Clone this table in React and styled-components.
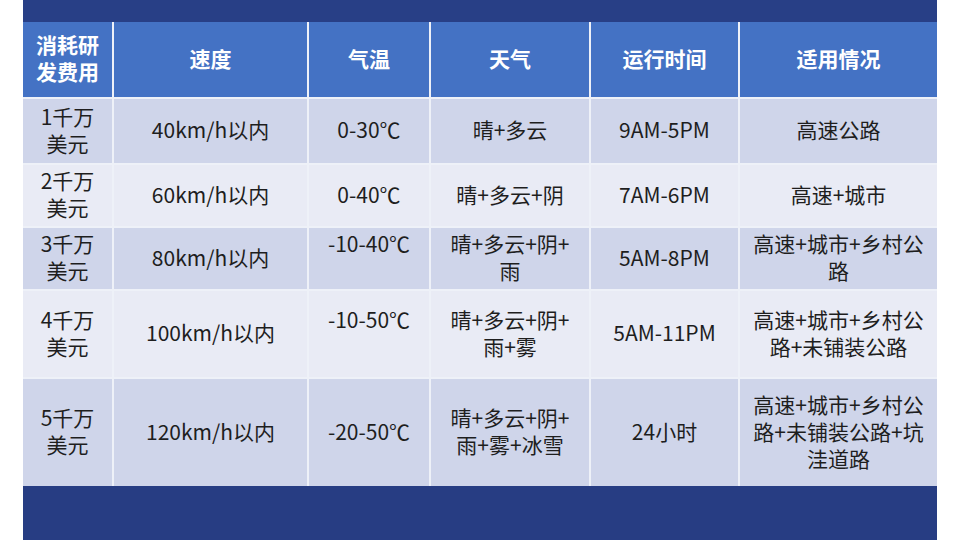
import React from "react";
import styled, { createGlobalStyle } from "styled-components";

const Global = createGlobalStyle`
  html, body { margin: 0; padding: 0; background: #ffffff; }
  body {
    width: 960px;
    height: 540px;
    overflow: hidden;
    font-family: "Noto Sans CJK SC", "Noto Sans", sans-serif;
  }
`;

const Page = styled.div`
  width: 960px;
  height: 540px;
  padding-left: 23px;
  box-sizing: border-box;
  background: #ffffff;
`;

const Slide = styled.div`
  width: 914px;
  height: 540px;
  display: flex;
  flex-direction: column;
  background: #27408a;
`;

const TopBand = styled.div`
  height: 22px;
  flex: none;
  background: #283f86;
`;

const Grid = styled.div`
  display: grid;
  grid-template-columns: 89px 193px 120px 158px 147px 197px;
  grid-template-rows: 75px 64px 61px 61px 86px 107px;
  gap: 2px;
  background: #eef1f8;
  flex: none;
`;

const Cell = styled.div`
  display: flex;
  align-items: center;
  justify-content: center;
  box-sizing: border-box;
  padding-bottom: 3px;
  text-align: center;
  white-space: nowrap;
  font-size: 21px;
  line-height: 27px;
  color: ${(p) => (p.$head ? "#ffffff" : "#1e1e1e")};
  font-weight: ${(p) => (p.$head ? 700 : 400)};
  background: ${(p) =>
    p.$head ? "#4472c4" : p.$odd ? "#cfd5ea" : "#e9ebf5"};
`;

const Lines = styled.div`
  display: flex;
  flex-direction: column;
  align-items: center;
`;

const Line = styled.span`
  display: block;
  height: 27px;
`;

const BottomBand = styled.div`
  flex: 1;
  background: #273d83;
`;

const header = [
  ["消耗研", "发费用"],
  ["速度"],
  ["气温"],
  ["天气"],
  ["运行时间"],
  ["适用情况"],
];

const rows = [
  [
    ["1千万", "美元"],
    ["40km/h以内"],
    ["0-30℃"],
    ["晴+多云"],
    ["9AM-5PM"],
    ["高速公路"],
  ],
  [
    ["2千万", "美元"],
    ["60km/h以内"],
    ["0-40℃"],
    ["晴+多云+阴"],
    ["7AM-6PM"],
    ["高速+城市"],
  ],
  [
    ["3千万", "美元"],
    ["80km/h以内"],
    ["-10-40℃", ""],
    ["晴+多云+阴+", "雨"],
    ["5AM-8PM"],
    ["高速+城市+乡村公", "路"],
  ],
  [
    ["4千万", "美元"],
    ["100km/h以内"],
    ["-10-50℃", ""],
    ["晴+多云+阴+", "雨+雾"],
    ["5AM-11PM"],
    ["高速+城市+乡村公", "路+未铺装公路"],
  ],
  [
    ["5千万", "美元"],
    ["120km/h以内"],
    ["-20-50℃"],
    ["晴+多云+阴+", "雨+雾+冰雪"],
    ["24小时"],
    ["高速+城市+乡村公", "路+未铺装公路+坑", "洼道路"],
  ],
];

function CellText({ lines }) {
  return (
    <Lines>
      {lines.map((l, i) => (
        <Line key={i}>{l || "\u00a0"}</Line>
      ))}
    </Lines>
  );
}

export default function App() {
  return (
    <Page>
      <Global />
      <Slide>
        <TopBand />
        <Grid>
          {header.map((c, i) => (
            <Cell key={"h" + i} $head>
              <CellText lines={c} />
            </Cell>
          ))}
          {rows.map((r, ri) =>
            r.map((c, ci) => (
              <Cell key={ri + "-" + ci} $odd={ri % 2 === 0}>
                <CellText lines={c} />
              </Cell>
            ))
          )}
        </Grid>
        <BottomBand />
      </Slide>
    </Page>
  );
}
